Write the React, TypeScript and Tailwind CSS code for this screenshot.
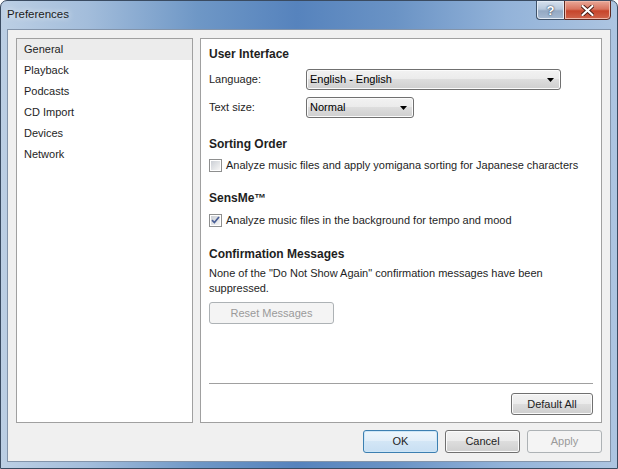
import type { ReactNode } from 'react';

const font = { fontFamily: '"Liberation Sans", Arial, sans-serif' };

const navItems = ['General', 'Playback', 'Podcasts', 'CD Import', 'Devices', 'Network'];

function Heading({ children, className = '' }: { children: ReactNode; className?: string }) {
  return (
    <div className={`h-[16px] flex items-center text-[12px] font-bold text-[#1e1e1e] ${className}`}>
      {children}
    </div>
  );
}

function Combo({ value, width }: { value: string; width: string }) {
  return (
    <div
      className={`${width} h-[21px] flex items-center justify-between pl-[3px] pr-[6px] rounded-[3px] border border-[#707070] bg-[linear-gradient(180deg,#f2f2f2_0%,#ebebeb_49%,#dddddd_50%,#cfcfcf_100%)] shadow-[inset_0_0_0_1px_#fbfbfb] text-[11px] text-black`}
    >
      <span>{value}</span>
      <svg width="7" height="4" viewBox="0 0 7 4">
        <path d="M0 0 H7 L3.5 4 Z" fill="#000" />
      </svg>
    </div>
  );
}

function Checkbox({ checked, label, className = '' }: { checked: boolean; label: string; className?: string }) {
  return (
    <div className={`h-[16px] flex items-center gap-[4px] text-[11px] text-[#1e1e1e] whitespace-nowrap ${className}`}>
      <div className="w-[13px] h-[13px] shrink-0 border border-[#8e8f8f] bg-white p-[1px]">
        <div className="w-full h-full bg-[linear-gradient(135deg,#cbcfd5_0%,#f6f6f6_100%)] flex items-center justify-center">
          {checked && (
            <svg width="9" height="8" viewBox="0 0 9 8">
              <path d="M1 4.2 L3.4 6.6 L8 1" stroke="#4a5f97" strokeWidth="1.7" fill="none" />
            </svg>
          )}
        </div>
      </div>
      <span>{label}</span>
    </div>
  );
}

function Button({
  children,
  kind = 'normal',
  className = '',
}: {
  children: ReactNode;
  kind?: 'normal' | 'default' | 'disabled';
  className?: string;
}) {
  const look =
    kind === 'default'
      ? 'border-[#3c7fb1] bg-[linear-gradient(180deg,#eef6fc_0%,#e1eef9_49%,#d3e6f6_50%,#c8dff3_100%)] shadow-[inset_0_0_0_1px_#cde6f7] text-[#1e1e1e]'
      : kind === 'disabled'
        ? 'border-[#adb2b5] bg-[#f4f4f4] text-[#9a9a9a]'
        : 'border-[#707070] bg-[linear-gradient(180deg,#f2f2f2_0%,#ebebeb_49%,#dddddd_50%,#cfcfcf_100%)] shadow-[inset_0_0_0_1px_#fbfbfb] text-[#1e1e1e]';
  return (
    <div className={`flex items-center justify-center rounded-[3px] border text-[11px] ${look} ${className}`}>
      {children}
    </div>
  );
}

export default function App() {
  return (
    <div
      style={font}
      className="w-[618px] h-[469px] flex flex-col rounded-t-[7px] border border-[#3a4b61] overflow-hidden bg-[linear-gradient(90deg,#bccfe4_0%,#a3bddb_14%,#6e97c6_32%,#5683bd_48%,#6a93c5_64%,#93b3d9_82%,#adc5e1_100%)]"
    >
      {/* title bar */}
      <div className="h-[28px] flex items-start justify-between shrink-0">
        <div className="h-[28px] flex items-center pl-[6px] text-[11.5px] text-[#1b1b1b] [text-shadow:0_0_6px_#ffffff]">
          Preferences
        </div>
        <div className="flex mr-[6px] -mt-[1px]">
          <div className="w-[28px] h-[20px] flex items-center justify-center rounded-bl-[4px] border border-[#3f5269] border-r-0 bg-[linear-gradient(180deg,#d6e1ee_0%,#b7c8dc_45%,#94a9c3_55%,#a6bad2_100%)] shadow-[inset_0_0_0_1px_#e3ebf5]">
            <span className="text-[13px] font-bold text-white leading-none [text-shadow:0_0_2px_#33465e,0_0_1px_#33465e]">?</span>
          </div>
          <div className="w-[47px] h-[20px] flex items-center justify-center rounded-br-[4px] border border-[#5e2a22] bg-[linear-gradient(180deg,#e9a898_0%,#d8745f_45%,#c7452b_55%,#d0654c_100%)] shadow-[inset_0_0_0_1px_#f0b7a8]">
            <svg width="13" height="11" viewBox="0 0 13 11">
              <path d="M1.5 1 L11.5 10 M11.5 1 L1.5 10" stroke="#4a1d15" strokeWidth="4" strokeLinecap="round" />
              <path d="M1.5 1 L11.5 10 M11.5 1 L1.5 10" stroke="#ffffff" strokeWidth="2.2" strokeLinecap="round" />
            </svg>
          </div>
        </div>
      </div>

      {/* client area */}
      <div className="flex-1 mx-[6px] mb-[6px] border border-[#8394aa] bg-[#f0f0f0] p-[8px] flex flex-col gap-[7px]">
        <div className="h-[385px] flex gap-[7px]">
          {/* category list */}
          <div className="w-[177px] border border-[#a0a0a0] bg-white flex flex-col">
            {navItems.map((item, i) => (
              <div
                key={item}
                className={`h-[21px] flex items-center pl-[7px] text-[11px] text-[#1e1e1e] ${i === 0 ? 'bg-[#ececec]' : ''}`}
              >
                {item}
              </div>
            ))}
          </div>

          {/* settings panel */}
          <div className="w-[402px] border border-[#a0a0a0] bg-white flex flex-col pl-[8px] pr-[8px] pt-[7px] pb-[7px]">
            <Heading>User Interface</Heading>
            <div className="mt-[7px] flex items-center text-[11px] text-[#1e1e1e]">
              <span className="w-[97px]">Language:</span>
              <Combo value="English - English" width="w-[255px]" />
            </div>
            <div className="mt-[7px] flex items-center text-[11px] text-[#1e1e1e]">
              <span className="w-[97px]">Text size:</span>
              <Combo value="Normal" width="w-[108px]" />
            </div>

            <Heading className="mt-[18px]">Sorting Order</Heading>
            <Checkbox
              className="mt-[5px]"
              checked={false}
              label="Analyze music files and apply yomigana sorting for Japanese characters"
            />

            <Heading className="mt-[17px]">SensMe™</Heading>
            <Checkbox
              className="mt-[6px]"
              checked
              label="Analyze music files in the background for tempo and mood"
            />

            <Heading className="mt-[18px]">Confirmation Messages</Heading>
            <p className="mt-[4px] text-[11px] leading-[15px] text-[#1e1e1e]">
              None of the "Do Not Show Again" confirmation messages have been suppressed.
            </p>
            <Button kind="disabled" className="mt-[6px] w-[125px] h-[22px]">
              Reset Messages
            </Button>

            <div className="flex-1" />
            <div className="border-t border-[#a0a0a0]" />
            <div className="mt-[9px] flex justify-end">
              <Button className="w-[82px] h-[22px]">Default All</Button>
            </div>
          </div>
        </div>

        {/* dialog buttons */}
        <div className="flex justify-end gap-[7px]">
          <Button kind="default" className="w-[75px] h-[23px]">OK</Button>
          <Button className="w-[75px] h-[23px]">Cancel</Button>
          <Button kind="disabled" className="w-[75px] h-[23px]">Apply</Button>
        </div>
      </div>
    </div>
  );
}
